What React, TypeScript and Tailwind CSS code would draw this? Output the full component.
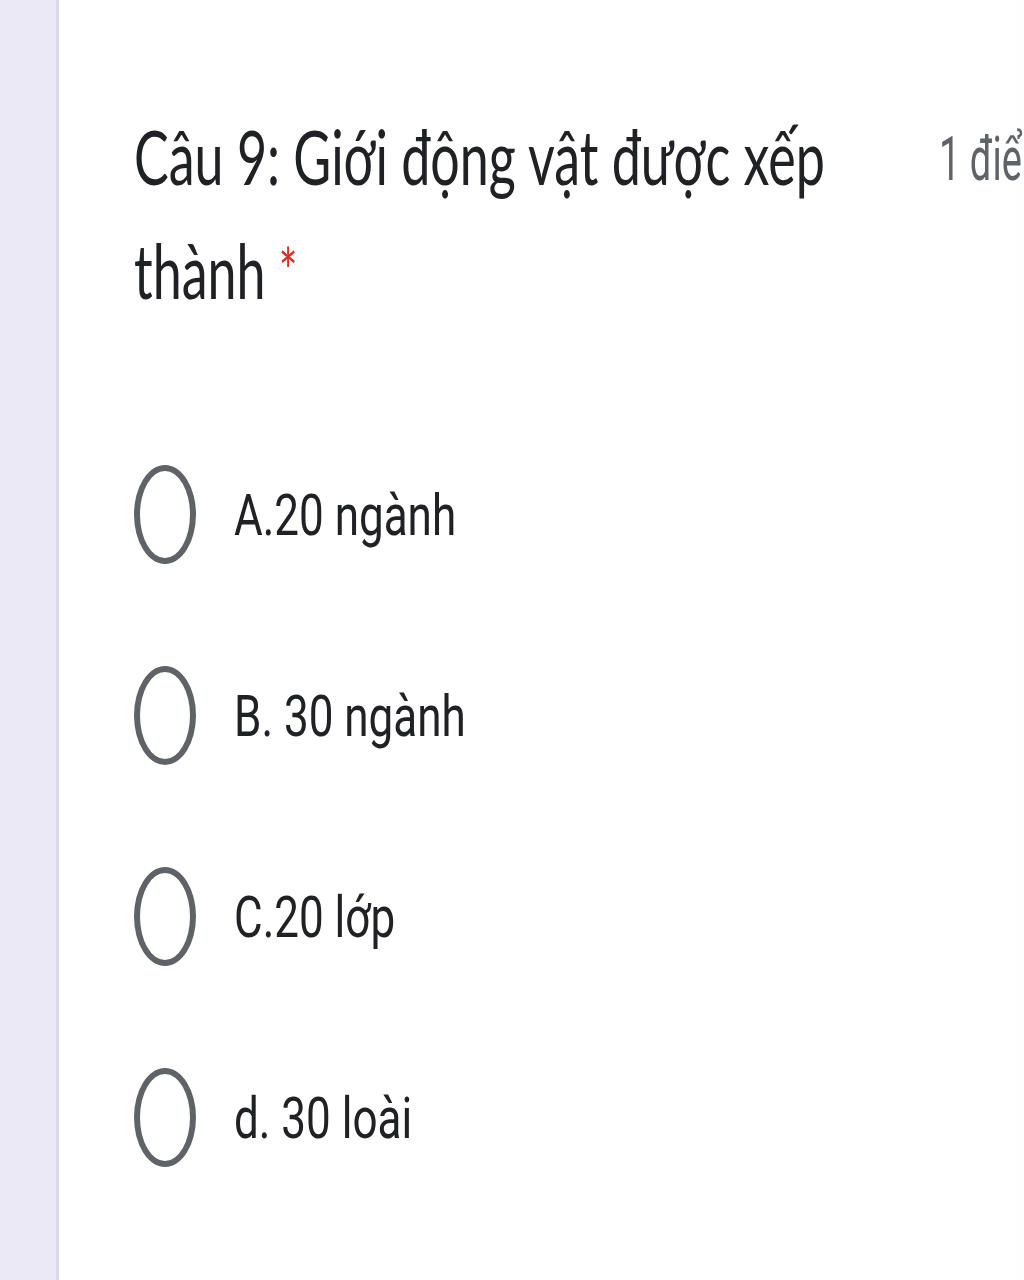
// Google Forms question card, zoomed & stretched. Radio options, required star.

const options = ['A.20 ngành', 'B. 30 ngành', 'C.20 lớp', 'd. 30 loài']

function Radio() {
  return <span className="block w-[62px] h-[99px] shrink-0 rounded-[50%] border-[6px] border-[#5f6368]" />
}

export default function App() {
  return (
    <div className="w-[1024px] h-[1280px] overflow-hidden flex bg-white">
      {/* Lavender page background */}
      <div className="w-[59px] shrink-0 bg-[#ece9f7] border-r-[3px] border-[#dcdae6]" />

      <main className="relative flex-1 pl-[75px]">
        {/* Header row */}
        <div className="flex pt-[98px]">
          <h2
            className="w-[770px] shrink-0 origin-top-left scale-y-[1.47] text-[52px] leading-[78px] text-[#202124]"
            style={{ fontFamily: 'Lato, "Noto Sans", sans-serif' }}
          >
            Câu 9: Giới động vật được xếp thành{' '}
            <span className="text-[44px] align-top text-[#d93025]">*</span>
          </h2>
          <span
            className="ml-[35px] mt-[21px] origin-top-left scale-y-[1.6] whitespace-nowrap text-[38px] leading-[50px] text-[#5f6368]"
            style={{ fontFamily: 'Roboto, "Noto Sans", sans-serif' }}
          >
            1 điểm
          </span>
        </div>

        {/* Options */}
        <ul className="mt-[160px] flex flex-col">
          {options.map((o) => (
            <li key={o} className="h-[201px] flex items-center gap-[38px]">
              <Radio />
              <span
                className="inline-block scale-y-[1.32] text-[44px] leading-[60px] text-[#202124]"
                style={{ fontFamily: 'Roboto, "Noto Sans", sans-serif' }}
              >
                {o}
              </span>
            </li>
          ))}
        </ul>

        {/* Right edge shading + scrollbar */}
        <div className="pointer-events-none absolute top-0 right-0 h-full w-[40px] bg-gradient-to-r from-transparent to-[#00000008]" />
        <div className="absolute top-0 right-0 w-[6px] h-[130px] rounded-bl-[6px] bg-gradient-to-b from-[#8a8a8a] via-[#b5b5b5] to-[#e6e6e6]" />
      </main>
    </div>
  )
}
